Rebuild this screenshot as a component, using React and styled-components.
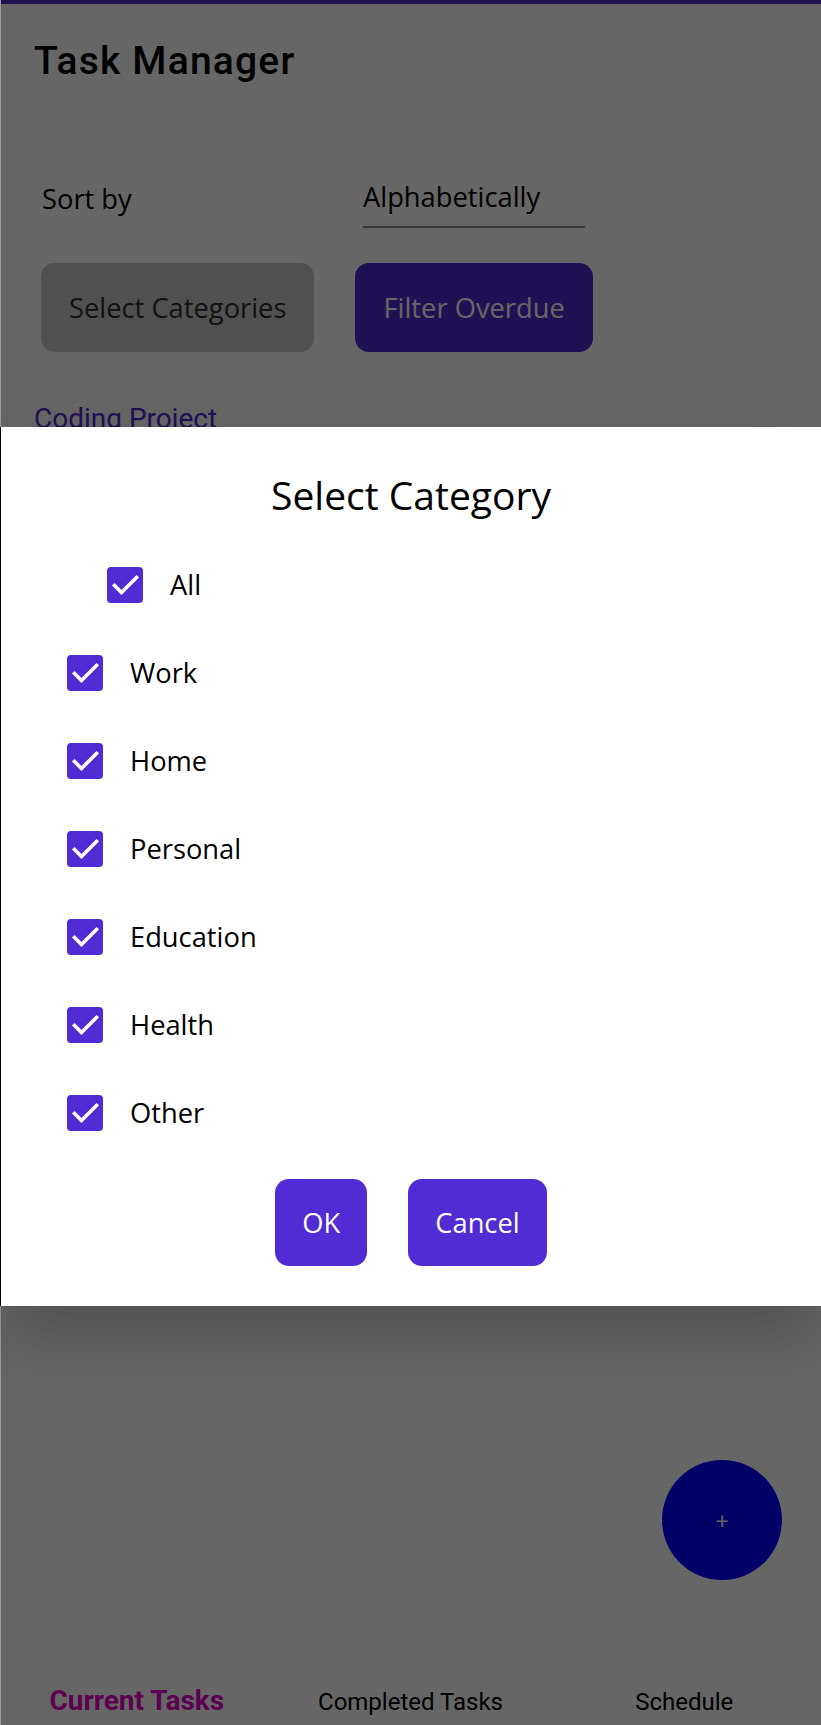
import React from 'react';
import styled, { createGlobalStyle } from 'styled-components';

const PRIMARY = '#512bd4';
const BODY_SIZE = '27.3px';

const GlobalStyle = createGlobalStyle`
  html, body {
    margin: 0;
    padding: 0;
    background: #ffffff;
  }
  * {
    box-sizing: border-box;
  }
`;

const CATEGORIES = ['Work', 'Home', 'Personal', 'Education', 'Health', 'Other'];
const TABS = ['Current Tasks', 'Completed Tasks', 'Schedule'];

function CheckMark() {
  return (
    <svg width="36" height="36" viewBox="0 0 36 36">
      <path
        d="M7.5 18.5 L14.5 25.5 L29.5 10.5"
        fill="none"
        stroke="#ffffff"
        strokeWidth="3.6"
        strokeLinecap="square"
      />
    </svg>
  );
}

function CategoryOption({ label, indent }) {
  return (
    <OptionRow $indent={indent}>
      <Checkbox>
        <CheckMark />
      </Checkbox>
      <OptionLabel>{label}</OptionLabel>
    </OptionRow>
  );
}

export default function App() {
  return (
    <>
      <GlobalStyle />
      <Screen>
        <StatusStrip />
        <Title>Task Manager</Title>
        <SortRow>
          <SortLabel>Sort by</SortLabel>
          <PickerField>Alphabetically</PickerField>
        </SortRow>
        <ActionRow>
          <ActionButton $variant="muted">Select Categories</ActionButton>
          <ActionButton>Filter Overdue</ActionButton>
        </ActionRow>
        <GroupTitle>Coding Project</GroupTitle>
        <TabBar>
          {TABS.map((tab, i) => (
            <Tab key={tab} $active={i === 0}>
              {tab}
            </Tab>
          ))}
        </TabBar>
        <Fab>+</Fab>

        <Backdrop />
        <Dialog>
          <DialogTitle>Select Category</DialogTitle>
          <OptionList>
            <CategoryOption label="All" indent={107} />
            {CATEGORIES.map((c) => (
              <CategoryOption key={c} label={c} indent={67} />
            ))}
          </OptionList>
          <DialogActions>
            <DialogButton>OK</DialogButton>
            <DialogButton>Cancel</DialogButton>
          </DialogActions>
        </Dialog>
      </Screen>
    </>
  );
}

const Screen = styled.div`
  position: relative;
  width: 821px;
  height: 1725px;
  overflow: hidden;
  display: flex;
  flex-direction: column;
  background: #ffffff;
  font-family: 'Open Sans', 'Noto Sans', sans-serif;
`;

const StatusStrip = styled.div`
  height: 4px;
  background: ${PRIMARY};
`;

const Title = styled.h1`
  margin: 34px 0 0 34px;
  font-family: Roboto, 'Noto Sans', sans-serif;
  font-weight: 500;
  font-size: 39px;
  line-height: 46px;
  letter-spacing: 1.2px;
  color: #000000;
`;

const SortRow = styled.div`
  display: flex;
  align-items: flex-start;
  margin-top: 96px;
  padding-left: 42px;
`;

const SortLabel = styled.div`
  width: 321px;
  font-size: ${BODY_SIZE};
  line-height: 38px;
  color: #000000;
`;

const PickerField = styled.div`
  width: 222px;
  margin-top: -2px;
  padding-bottom: 10px;
  font-size: ${BODY_SIZE};
  line-height: 38px;
  color: #000000;
  border-bottom: 2px solid #8f8f8f;
`;

const ActionRow = styled.div`
  display: flex;
  gap: 41px;
  margin-top: 35px;
  padding-left: 41px;
`;

const ActionButton = styled.button`
  height: 89px;
  padding: 0 28px;
  border: none;
  border-radius: 14px;
  font-family: 'Open Sans', 'Noto Sans', sans-serif;
  font-size: ${BODY_SIZE};
  background: ${({ $variant }) => ($variant === 'muted' ? '#c8c8c8' : PRIMARY)};
  color: ${({ $variant }) => ($variant === 'muted' ? '#2e2e2e' : '#ffffff')};
`;

const GroupTitle = styled.div`
  margin: 50px 0 0 34px;
  font-family: Roboto, 'Noto Sans', sans-serif;
  font-size: 28px;
  color: ${PRIMARY};
`;

const TabBar = styled.nav`
  display: flex;
  align-items: baseline;
  margin-top: auto;
  padding-bottom: 9px;
`;

const Tab = styled.div`
  flex: 1;
  text-align: center;
  font-family: Roboto, 'Noto Sans', sans-serif;
  font-size: ${({ $active }) => ($active ? '28px' : '24px')};
  font-weight: ${({ $active }) => ($active ? 700 : 400)};
  line-height: 28px;
  color: ${({ $active }) => ($active ? '#e800cc' : '#000000')};
`;

const Fab = styled.div`
  position: absolute;
  left: 662px;
  top: 1460px;
  width: 120px;
  height: 120px;
  border-radius: 50%;
  background: #0000ff;
  display: flex;
  align-items: center;
  justify-content: center;
  font-family: 'Open Sans', sans-serif;
  font-size: 24px;
  color: #ffffff;
`;

const Backdrop = styled.div`
  position: absolute;
  inset: 0;
  background: rgba(0, 0, 0, 0.6);
  border-left: 1px solid #9a9a9a;
`;

const Dialog = styled.div`
  position: absolute;
  top: 427px;
  left: 0;
  right: 0;
  height: 879px;
  display: flex;
  flex-direction: column;
  padding: 41px 0 40px;
  background: #ffffff;
  border-left: 1px solid #000000;
  box-shadow: 0 32px 64px rgba(0, 0, 0, 0.2);
`;

const DialogTitle = styled.h2`
  margin: 0;
  text-align: center;
  font-weight: 400;
  font-size: 39px;
  line-height: 53px;
  color: #000000;
`;

const OptionList = styled.div`
  display: flex;
  flex-direction: column;
  gap: 52px;
  margin-top: 46px;
`;

const OptionRow = styled.label`
  display: flex;
  align-items: center;
  gap: 27px;
  height: 36px;
  padding-left: ${({ $indent }) => $indent - 1}px;
`;

const Checkbox = styled.span`
  display: flex;
  width: 36px;
  height: 36px;
  border-radius: 4px;
  background: ${PRIMARY};
`;

const OptionLabel = styled.span`
  font-size: ${BODY_SIZE};
  line-height: 38px;
  color: #000000;
`;

const DialogActions = styled.div`
  display: flex;
  justify-content: center;
  gap: 41px;
  margin-top: 48px;
`;

const DialogButton = styled.button`
  height: 87px;
  padding: 0 27px;
  border: none;
  border-radius: 14px;
  background: ${PRIMARY};
  color: #ffffff;
  font-family: 'Open Sans', 'Noto Sans', sans-serif;
  font-size: ${BODY_SIZE};
`;
